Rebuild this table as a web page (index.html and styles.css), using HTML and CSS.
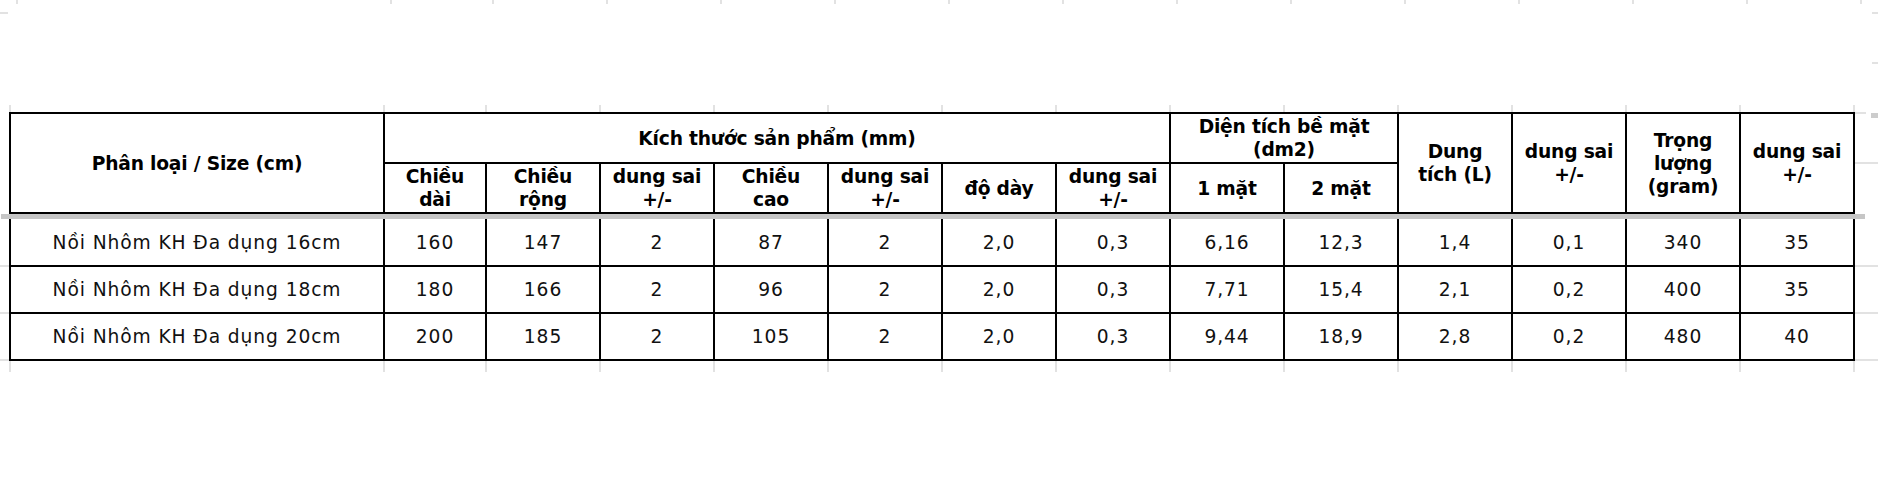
FILE: index.html
```html
<!DOCTYPE html>
<html lang="vi">
<head>
<meta charset="utf-8">
<title>Bảng kích thước nồi nhôm</title>
<link rel="stylesheet" href="styles.css">
</head>
<body>
<div class="sheet">
  <svg class="gridlines" width="1878" height="500" viewBox="0 0 1878 500" aria-hidden="true">
    <g stroke="#e2e2e2" stroke-width="2">
      <path d="M17 0V4M391 0V4M493 0V4M607 0V4M721 0V4M835 0V4M949 0V4M1063 0V4M1177 0V4M1291 0V4M1405 0V4M1519 0V4M1633 0V4M1747 0V4M1861 0V4"/>
      <path d="M10 105V112M384 105V112M486 105V112M600 105V112M714 105V112M828 105V112M942 105V112M1056 105V112M1170 105V112M1284 105V112M1398 105V112M1512 105V112M1626 105V112M1740 105V112M1854 105V112"/>
      <path d="M10 361V372M384 361V372M486 361V372M600 361V372M714 361V372M828 361V372M942 361V372M1056 361V372M1170 361V372M1284 361V372M1398 361V372M1512 361V372M1626 361V372M1740 361V372M1854 361V372"/>
      <path d="M0 13H8M1872 13H1878M1872 63H1878M1855 113H1866M1855 163H1878M1855 266H1878M1855 313H1878M1855 360H1878M0 266H9M0 313H9M0 360H9"/>
    </g>
    <rect x="1871" y="113" width="7" height="5" fill="#cccccc"/>
  </svg>

  <div class="table">
    <div class="thead">
      <div class="cell h c-name">Phân loại / Size (cm)</div>
      <div class="cell h c-dim">Kích thước sản phẩm (mm)</div>
      <div class="cell h c-area">Diện tích bề mặt<br>(dm2)</div>
      <div class="cell h c-vol">Dung<br>tích (L)</div>
      <div class="cell h c-tol1">dung sai<br>+/-</div>
      <div class="cell h c-wt">Trọng<br>lượng<br>(gram)</div>
      <div class="cell h c-tol2">dung sai<br>+/-</div>

      <div class="cell h">Chiều<br>dài</div>
      <div class="cell h">Chiều<br>rộng</div>
      <div class="cell h">dung sai<br>+/-</div>
      <div class="cell h">Chiều<br>cao</div>
      <div class="cell h">dung sai<br>+/-</div>
      <div class="cell h">độ dày</div>
      <div class="cell h">dung sai<br>+/-</div>
      <div class="cell h">1 mặt</div>
      <div class="cell h">2 mặt</div>
    </div>
    <div class="freeze"></div>
    <div class="tbody">
      <div class="cell">Nồi Nhôm KH Đa dụng 16cm</div>
      <div class="cell">160</div><div class="cell">147</div><div class="cell">2</div><div class="cell">87</div><div class="cell">2</div><div class="cell">2,0</div><div class="cell">0,3</div><div class="cell">6,16</div><div class="cell">12,3</div><div class="cell">1,4</div><div class="cell">0,1</div><div class="cell">340</div><div class="cell">35</div>

      <div class="cell">Nồi Nhôm KH Đa dụng 18cm</div>
      <div class="cell">180</div><div class="cell">166</div><div class="cell">2</div><div class="cell">96</div><div class="cell">2</div><div class="cell">2,0</div><div class="cell">0,3</div><div class="cell">7,71</div><div class="cell">15,4</div><div class="cell">2,1</div><div class="cell">0,2</div><div class="cell">400</div><div class="cell">35</div>

      <div class="cell">Nồi Nhôm KH Đa dụng 20cm</div>
      <div class="cell">200</div><div class="cell">185</div><div class="cell">2</div><div class="cell">105</div><div class="cell">2</div><div class="cell">2,0</div><div class="cell">0,3</div><div class="cell">9,44</div><div class="cell">18,9</div><div class="cell">2,8</div><div class="cell">0,2</div><div class="cell">480</div><div class="cell">40</div>
    </div>
  </div>
</div>
</body>
</html>
```

FILE: styles.css
```css
html, body {
  margin: 0;
  padding: 0;
  background: #ffffff;
}

.sheet {
  position: relative;
  width: 1878px;
  height: 500px;
  padding-top: 112px;
  box-sizing: border-box;
  font-family: "DejaVu Sans", "Liberation Sans", sans-serif;
  color: #000;
}

.gridlines {
  position: absolute;
  left: 0;
  top: 0;
  z-index: 0;
}

.table {
  position: relative;
  z-index: 1;
  margin-left: 9px;
  width: 1846px;
}

.thead,
.tbody {
  display: grid;
  grid-template-columns: 372px 100px repeat(12, 112px);
  gap: 2px;
  background: #000;
}

.thead {
  grid-template-rows: 48px 48px;
  padding: 2px;
}

.tbody {
  grid-template-rows: 46px 45px 45px;
  padding: 0 2px 2px;
}

.freeze {
  height: 5px;
  width: 1864px;
  margin-left: -8px;
  background: #c6c6c6;
}

.cell {
  background: #fff;
  display: flex;
  align-items: center;
  justify-content: center;
  text-align: center;
  font-size: 18.67px;
  line-height: 23px;
  letter-spacing: 0.9px;
  white-space: nowrap;
  color: #111;
}

.cell.h {
  font-weight: bold;
  letter-spacing: -0.2px;
  line-height: 23px;
  color: #000;
}

.c-name { grid-column: 1; grid-row: 1 / 3; }
.c-dim { grid-column: 2 / 9; grid-row: 1; }
.c-area { grid-column: 9 / 11; grid-row: 1; }
.c-vol { grid-column: 11; grid-row: 1 / 3; }
.c-tol1 { grid-column: 12; grid-row: 1 / 3; }
.c-wt { grid-column: 13; grid-row: 1 / 3; line-height: 22.5px; }
.c-tol2 { grid-column: 14; grid-row: 1 / 3; }
```
